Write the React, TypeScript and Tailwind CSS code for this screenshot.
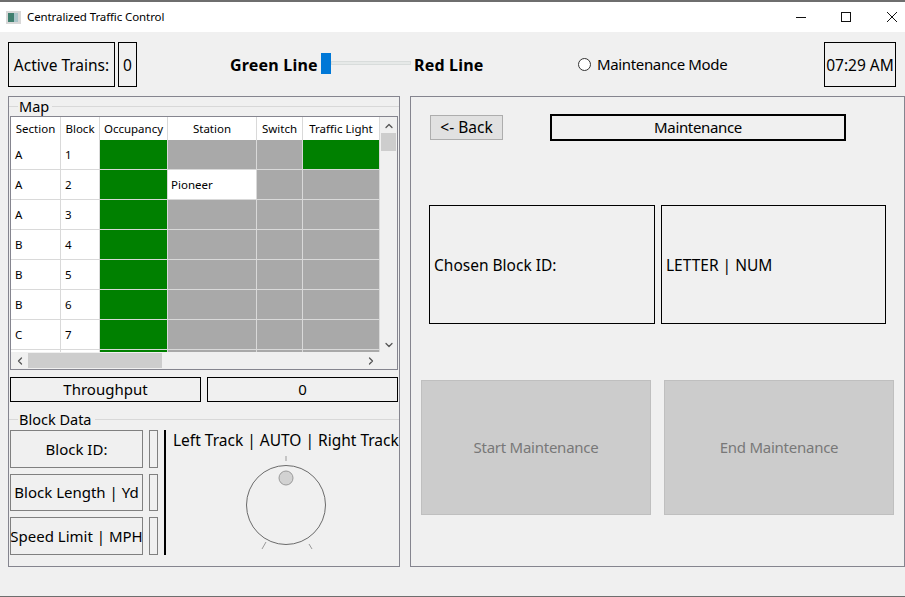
import { ChevronDown, ChevronLeft, ChevronRight, ChevronUp } from "lucide-react";

const font = "font-['Noto_Sans','Liberation_Sans',sans-serif]";

const columns = [
  { label: "Section", width: "w-[50px]" },
  { label: "Block", width: "w-[39px]" },
  { label: "Occupancy", width: "w-[68px]" },
  { label: "Station", width: "w-[89px]" },
  { label: "Switch", width: "w-[46px]" },
  { label: "Traffic Light", width: "w-[77px]" },
];

const rows = [
  { section: "A", block: "1", station: "", light: true },
  { section: "A", block: "2", station: "Pioneer", light: false },
  { section: "A", block: "3", station: "", light: false },
  { section: "B", block: "4", station: "", light: false },
  { section: "B", block: "5", station: "", light: false },
  { section: "B", block: "6", station: "", light: false },
  { section: "C", block: "7", station: "", light: false },
  { section: "", block: "", station: "", light: false },
];

const cell = "h-[30px] shrink-0 border-r border-b border-[#d9d9d9] flex items-center pt-[1px]";

function GroupTitle({ title }: { title: string }) {
  return (
    <div className="flex items-center h-[19px] text-[14.5px] leading-none">
      <div className="w-[9px] h-px bg-[#d8d8d8]" />
      <span className="px-[1px] -mt-[1px]">{title}</span>
      <div className="flex-1 h-px bg-[#d8d8d8] ml-[2px]" />
    </div>
  );
}

function MapTable() {
  return (
    <div className="mx-[1px] h-[254px] border border-[#85858f] flex flex-col bg-[#f0f0f0]">
      <div className="flex h-[235px]">
        <div className="w-[369px] overflow-hidden bg-white text-[11.5px]">
          <div className="flex h-[23px]">
            {columns.map((c) => (
              <div key={c.label} className={`${c.width} shrink-0 border-r border-[#d9d9d9] flex items-center justify-center whitespace-nowrap pt-[1px]`}>
                {c.label}
              </div>
            ))}
          </div>
          {rows.map((r, i) => (
            <div key={i} className="flex">
              <div className={`${cell} w-[50px] pl-1`}>{r.section}</div>
              <div className={`${cell} w-[39px] pl-1`}>{r.block}</div>
              <div className={`${cell} w-[68px] bg-[#008000]`} />
              <div className={`${cell} w-[89px] pl-[3px] ${r.station ? "bg-white" : "bg-[#a9a9a9]"}`}>{r.station}</div>
              <div className={`${cell} w-[46px] bg-[#a9a9a9]`} />
              <div className={`${cell} w-[77px] ${r.light ? "bg-[#008000]" : "bg-[#a9a9a9]"}`} />
            </div>
          ))}
        </div>
        <div className="w-[17px] flex flex-col items-center text-[#555]">
          <ChevronUp size={12} strokeWidth={2.5} className="mt-[3px]" />
          <div className="w-[15px] h-[18px] bg-[#cdcdcd] mt-[1px]" />
          <div className="flex-1" />
          <ChevronDown size={12} strokeWidth={2.5} className="mb-[1px]" />
        </div>
      </div>
      <div className="flex items-center h-[17px] text-[#555]">
        <ChevronLeft size={12} strokeWidth={2.5} className="ml-[3px]" />
        <div className="w-[134px] h-[15px] bg-[#cdcdcd] ml-[2px]" />
        <div className="flex-1" />
        <ChevronRight size={12} strokeWidth={2.5} className="mr-[20px]" />
      </div>
    </div>
  );
}

function Dial() {
  return (
    <svg width="100" height="96" viewBox="0 0 100 96" className="block mt-[5px]">
      <line x1="50" y1="1" x2="50" y2="6" stroke="#9a9a9a" />
      <circle cx="50" cy="50" r="39.5" fill="#f0f0f0" stroke="#6b6b6b" />
      <circle cx="50" cy="23" r="7" fill="#d2d2d2" stroke="#9a9a9a" />
      <line x1="30" y1="87" x2="26" y2="94" stroke="#9a9a9a" />
      <line x1="73" y1="89" x2="76" y2="94" stroke="#9a9a9a" />
    </svg>
  );
}

function CaptionButtons() {
  return (
    <div className="ml-auto flex items-center">
      <svg width="10" height="10" viewBox="0 0 10 10" className="mr-[35px]">
        <line x1="0" y1="5.5" x2="10" y2="5.5" stroke="#111" />
      </svg>
      <svg width="10" height="10" viewBox="0 0 10 10" className="mr-[36px]">
        <rect x="0.5" y="0.5" width="9" height="9" fill="none" stroke="#111" />
      </svg>
      <svg width="10" height="10" viewBox="0 0 10 10" className="mr-[8px]">
        <path d="M0 0L10 10M10 0L0 10" stroke="#111" fill="none" />
      </svg>
    </div>
  );
}

export default function App() {
  return (
    <div className={`${font} w-[905px] h-[597px] overflow-hidden bg-[#f0f0f0] text-black flex flex-col border-b border-[#6e6e6e]`}>
      {/* Title bar */}
      <div className="h-[32px] shrink-0 bg-white border-t-2 border-[#6e6e6e] flex items-center">
        <svg width="15" height="13" viewBox="0 0 15 13" className="ml-[6px]">
          <rect width="15" height="13" fill="#d8d8d8" />
          <rect x="2" y="2" width="6" height="9" fill="#3f7f6f" />
          <rect x="8" y="2" width="4" height="9" fill="#a9c4c9" />
        </svg>
        <span className="ml-[6px] text-[11.5px] tracking-[-0.1px]">Centralized Traffic Control</span>
        <CaptionButtons />
      </div>

      {/* Top status row */}
      <div className="h-[45px] mt-[10px] ml-[8px] mr-[9px] flex items-center text-[15.5px]">
        <div className="w-[107px] h-full border border-black flex items-center justify-center whitespace-nowrap pt-[2px]">Active Trains:</div>
        <div className="w-[19px] h-full ml-[3px] border border-black flex items-center justify-center pt-[2px]">0</div>
        <div className="ml-[93px] w-[88px] font-bold text-[16px] tracking-[0.2px] whitespace-nowrap">Green Line</div>
        <div className="w-[90px] ml-[3px] flex items-center -mt-[3px]">
          <div className="w-[10px] h-[21px] bg-[#0078d7]" />
          <div className="flex-1 h-[4px] bg-[#e6e9e8] border border-[#d8dcdb]" />
        </div>
        <div className="ml-[3px] w-[72px] font-bold text-[16px] tracking-[0.2px] whitespace-nowrap">Red Line</div>
        <div className="ml-[92px] w-[13px] h-[13px] rounded-full bg-white border border-[#333]" />
        <div className="ml-[6px] text-[15px] tracking-[-0.35px] whitespace-nowrap">Maintenance Mode</div>
        <div className="ml-auto w-[72px] h-full border border-black flex items-center justify-center whitespace-nowrap pt-[2px]">07:29 AM</div>
      </div>

      {/* Main panels */}
      <div className="flex mt-[9px] ml-[8px] h-[471px]">
        <div className="w-[392px] border border-[#85858f] flex flex-col">
          <GroupTitle title="Map" />
          <MapTable />
          <div className="flex gap-[6px] mx-[1px] mt-[7px] h-[25px] text-[15px]">
            <div className="w-[191px] border border-black flex items-center justify-center">Throughput</div>
            <div className="w-[191px] border border-black flex items-center justify-center">0</div>
          </div>
          <div className="mt-[8px]">
            <GroupTitle title="Block Data" />
          </div>
          <div className="flex mt-[1px] ml-[1px] text-[15px]">
            <div className="flex flex-col gap-[6px]">
              {[
                { label: "Block ID:", height: "h-[38px]" },
                { label: "Block Length | Yd", height: "h-[37px]" },
                { label: "Speed Limit | MPH", height: "h-[38px]" },
              ].map((b) => (
                <div key={b.label} className={`flex gap-[6px] ${b.height}`}>
                  <div className="w-[133px] border border-[#808080] flex items-center justify-center whitespace-nowrap">{b.label}</div>
                  <div className="w-[9px] border border-[#808080]" />
                </div>
              ))}
            </div>
            <div className="w-[2px] h-[125px] bg-black ml-[6px]" />
            <div className="ml-[7px] flex flex-col items-center">
              <div className="whitespace-nowrap leading-[20px] text-[15.5px]">Left Track | AUTO | Right Track</div>
              <Dial />
            </div>
          </div>
        </div>

        <div className="ml-[10px] w-[496px] border border-[#85858f] flex flex-col text-[15.5px]">
          <div className="flex items-center mt-[17px] ml-[19px]">
            <div className="w-[73px] h-[25px] bg-[#e1e1e1] border border-[#adadad] flex items-center justify-center whitespace-nowrap pt-[1px]">&lt;- Back</div>
            <div className="ml-[47px] w-[296px] h-[27px] border-2 border-black flex items-center justify-center text-[15px] tracking-[-0.35px]">Maintenance</div>
          </div>
          <div className="flex mt-[64px] ml-[18px] gap-[6px] h-[119px]">
            <div className="w-[226px] border border-black flex items-center pl-[4px] pt-[2px]">Chosen Block ID:</div>
            <div className="w-[225px] border border-black flex items-center pl-[4px] pt-[2px]">LETTER | NUM</div>
          </div>
          <div className="flex mt-[56px] ml-[10px] gap-[13px] h-[135px] text-[#787878] text-[15px] tracking-[-0.25px]">
            <div className="w-[230px] bg-[#cccccc] border border-[#bfbfbf] flex items-center justify-center">Start Maintenance</div>
            <div className="w-[230px] bg-[#cccccc] border border-[#bfbfbf] flex items-center justify-center">End Maintenance</div>
          </div>
        </div>
      </div>
    </div>
  );
}
